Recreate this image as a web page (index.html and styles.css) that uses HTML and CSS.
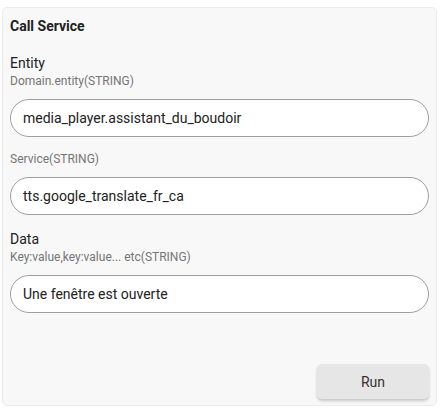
FILE: index.html
```html
<!DOCTYPE html>
<html lang="en">
<head>
    <meta charset="UTF-8">
    <meta name="viewport" content="width=device-width, initial-scale=1.0">
    <title>Call Service</title>
    <link rel="stylesheet" href="styles.css">
</head>
<body>

<div class="card">
    <h1 class="card-title">Call Service</h1>

    <div class="field">
        <label class="field-label" for="entity">Entity</label>
        <div class="field-help">Domain.entity(STRING)</div>
        <input type="text" id="entity" class="field-input" value="media_player.assistant_du_boudoir">
    </div>

    <div class="field">
        <div class="field-help">Service(STRING)</div>
        <input type="text" id="service" class="field-input" value="tts.google_translate_fr_ca">
    </div>

    <div class="field">
        <label class="field-label" for="data">Data</label>
        <div class="field-help">Key:value,key:value... etc(STRING)</div>
        <input type="text" id="data" class="field-input" value="Une fenêtre est ouverte">
    </div>

    <div class="card-actions">
        <button class="run-button" id="run">Run</button>
    </div>
</div>

</body>
</html>
```

FILE: styles.css
```css
body {
    font-family: Roboto, 'Liberation Sans', Arial, sans-serif;
    background-color: #fff;
    margin: 0;
    padding: 7px 8px 0 2px;
}

.card {
    display: flex;
    flex-direction: column;
    height: 399px;
    box-sizing: border-box;
    padding: 0 7px 6px 7px;
    background-color: #f8f8f8;
    border: 1px solid #ececec;
    border-radius: 5px;
}

.card-title {
    margin: 8px 0 0 0;
    font-size: 14px;
    line-height: 20px;
    font-weight: bold;
    color: #212121;
}

.field {
    margin-top: 14px;
}

.field:first-of-type {
    margin-top: 17px;
}

.field-label {
    display: block;
    font-size: 14px;
    line-height: 20px;
    color: #212121;
}

.field-help {
    font-size: 12px;
    line-height: 16px;
    color: #757575;
}

.field-input {
    display: block;
    box-sizing: border-box;
    width: 100%;
    height: 38px;
    margin-top: 10px;
    padding: 0 12px;
    font-family: inherit;
    font-size: 14px;
    color: #212121;
    background-color: #fff;
    border: 1px solid #9e9e9e;
    border-radius: 19px;
    outline: none;
}

.card-actions {
    margin-top: auto;
    display: flex;
    justify-content: flex-end;
}

.run-button {
    width: 112px;
    height: 35px;
    font-family: inherit;
    font-size: 14px;
    color: #333;
    background-color: #e6e6e6;
    border: none;
    border-radius: 5px;
    box-shadow: 0 2px 3px rgba(0, 0, 0, 0.2);
    cursor: pointer;
}

.run-button:hover {
    background-color: #dcdcdc;
}
```
